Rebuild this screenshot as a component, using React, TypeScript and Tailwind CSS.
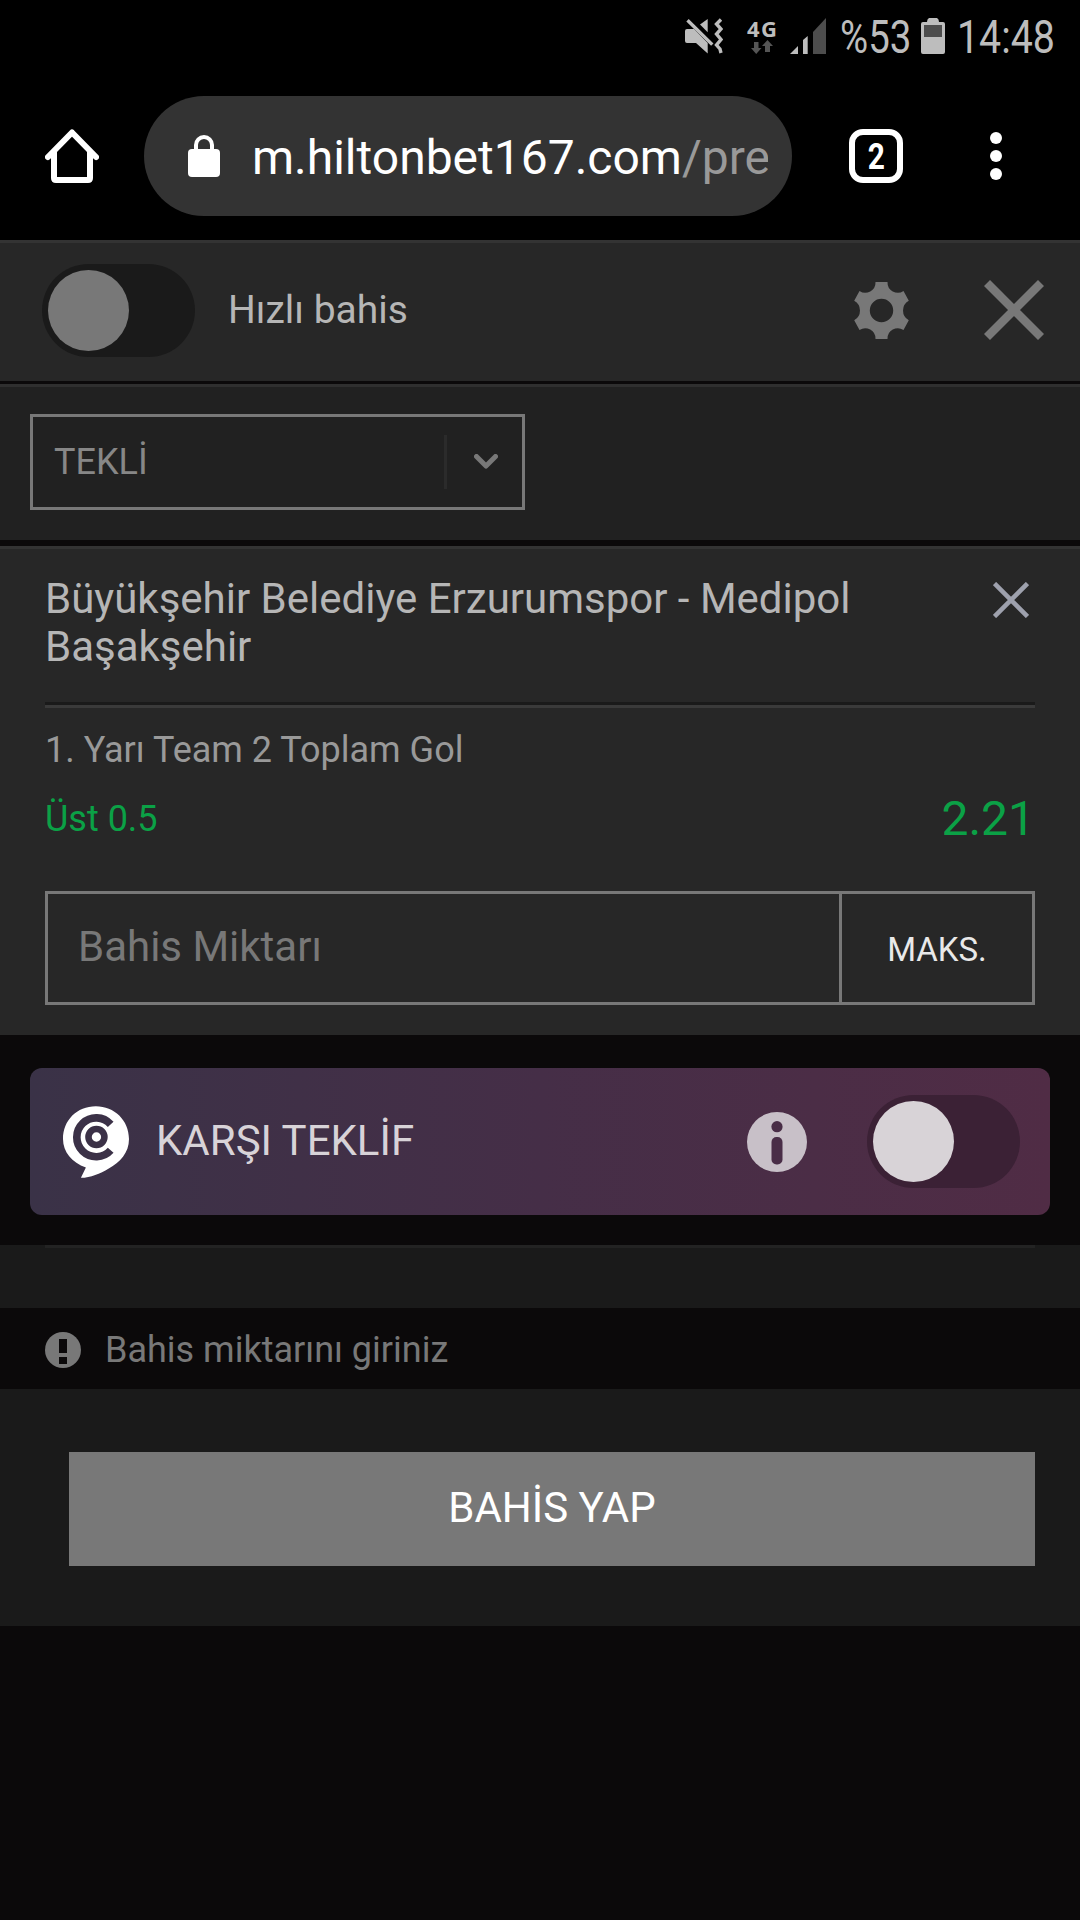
import { useState } from "react";
import clsx from "clsx";

function StatusBar() {
  return (
    <div className="flex h-[72px] items-center bg-black pl-[685px] text-[#bdbdbd]">
      <svg className="h-9 w-[38px] shrink-0" viewBox="0 0 38 36" fill="currentColor">
        <path d="M2 11H9L22.7 25V35.5L11 25H2Q0 25 0 23V13Q0 11 2 11Z" />
        <path d="M15 6.5L22.7 1V14.3Z" />
        <path
          d="M2.5 2.3L27.3 26.6M36 1.5L31.5 6L36 11L31.5 16L36 21.5L31.5 27L35 31L36 35"
          fill="none"
          stroke="currentColor"
          strokeWidth="3.4"
        />
      </svg>
      <div className="ml-6 flex h-9 w-[30px] shrink-0 flex-col">
        <span className="pt-[2px] font-['Open_Sans',sans-serif] text-[22px] leading-[16px] font-bold tracking-[1.5px]">
          4G
        </span>
        <svg className="mt-[4px] ml-[4px] h-[14px] w-[22px]" viewBox="0 0 22 14" fill="#555">
          <path d="M3 2H7.5V8H10.5L5.2 14L0 8H3Z" />
          <path d="M14 12H19V6H22L16.5 0L11 6H14Z" />
        </svg>
      </div>
      <svg className="ml-[13px] h-9 w-9 shrink-0" viewBox="0 0 36 36" fill="currentColor">
        <path d="M0 36L8 28V36ZM13 22L17.7 18V36H13Z" />
        <path d="M23 14L36 0V36H23Z" fill="#4d4d4d" />
      </svg>
      <div className="ml-[14px] w-[81px] shrink-0 pt-[2px]">
        <span className="block origin-left scale-x-[0.835] text-[46px] leading-[72px]">%53</span>
      </div>
      <svg className="h-9 w-6 shrink-0" viewBox="0 0 24 36" fill="currentColor">
        <path d="M8 0H16Q18 1 18 4H22Q24 4 24 6V34Q24 36 22 36H2Q0 36 0 34V6Q0 4 2 4H6Q6 1 8 0Z" />
        <path d="M3 7H21V19H3Z" fill="#4d4d4d" />
      </svg>
      <div className="ml-[12px] w-[100px] shrink-0 pt-[2px]">
        <span className="block origin-left scale-x-[0.855] text-[46px] leading-[72px]">14:48</span>
      </div>
    </div>
  );
}

function BrowserBar() {
  return (
    <div className="flex h-[168px] items-center bg-black pl-[45px] text-white">
      <svg className="h-[54px] w-[54px] shrink-0" viewBox="0 0 54 54" fill="none" stroke="currentColor" strokeWidth="6">
        <path d="M3 28L27 3.5L51 28" strokeLinecap="round" strokeLinejoin="round" />
        <path d="M9 22V49Q9 51 11 51H43Q45 51 45 49V22" />
      </svg>
      <div className="ml-[45px] flex h-[120px] w-[648px] shrink-0 items-center rounded-full bg-[#333] pl-11">
        <svg className="h-[42px] w-8 shrink-0" viewBox="0 0 32 42">
          <rect y="14" width="32" height="28" rx="4" fill="currentColor" />
          <path d="M8 16V10A8 8 0 0 1 24 10V16" fill="none" stroke="currentColor" strokeWidth="4" />
        </svg>
        <div className="ml-8 w-[516px] overflow-hidden pt-[4px] text-[48px] leading-[60px] whitespace-nowrap">
          m.hiltonbet167.com<span className="text-[#999]">/pre</span>
        </div>
      </div>
      <div className="ml-[57px] flex h-[54px] w-[54px] shrink-0 items-center justify-center rounded-[14px] border-[6px] border-white">
        <span className="scale-x-[0.83] pt-px text-[36px] leading-[42px] font-bold">2</span>
      </div>
      <svg className="ml-[87px] h-12 w-3 shrink-0" viewBox="0 0 12 48" fill="currentColor">
        <circle cx="6" cy="6" r="6" />
        <circle cx="6" cy="24" r="6" />
        <circle cx="6" cy="42" r="6" />
      </svg>
    </div>
  );
}

function Toggle({
  trackClass,
  knobClass,
}: {
  trackClass: string;
  knobClass: string;
}) {
  const [on, setOn] = useState(false);
  return (
    <button
      role="switch"
      aria-checked={on}
      onClick={() => setOn(!on)}
      className={clsx(
        "flex h-[93px] w-[153px] shrink-0 items-center rounded-full px-[6px]",
        on ? "justify-end" : "justify-start",
        trackClass
      )}
    >
      <span className={clsx("size-[81px] rounded-full", knobClass)} />
    </button>
  );
}

function SlipHeader() {
  return (
    <div className="flex h-[141px] items-start border-t-[3px] border-[#333] bg-[#272727] pt-[21px] pl-[42px]">
      <Toggle trackClass="bg-[#1a1a1a]" knobClass="bg-[#787878]" />
      <span className="ml-[33px] w-[626px] text-[39px] leading-[92px] text-[#b6b6b6]">Hızlı bahis</span>
      <svg className="mt-[18px] h-[57px] w-[55px] shrink-0 text-[#787878]" viewBox="-27.5 -28.5 55 57">
        <path
          fill="currentColor"
          fillRule="evenodd"
          d="M-6 -28.5H6A10.3 10.3 0 0 0 22 -19.5L27.3 -9.8A11.2 11.2 0 0 0 27.3 9.8L22 19.5A10.3 10.3 0 0 0 6 28.5H-6A10.3 10.3 0 0 0 -22 19.5L-27.3 9.8A11.2 11.2 0 0 0 -27.3 -9.8L-22 -19.5A10.3 10.3 0 0 0 -6 -28.5ZM0 -11.7A11.7 11.7 0 1 0 0 11.7A11.7 11.7 0 1 0 0 -11.7Z"
        />
      </svg>
      <svg className="mt-[16px] ml-[75px] size-[60px] shrink-0" viewBox="0 0 60 60" stroke="#787878" strokeWidth="8.5">
        <path d="M3 3L57 57M57 3L3 57" />
      </svg>
    </div>
  );
}

function BetTypeSelect() {
  return (
    <div className="mt-[3px] h-[156px] border-t-[3px] border-[#2f2f2f] bg-[#212121] pt-[27px] pl-[30px]">
      <div className="flex h-24 w-[495px] items-center border-[3px] border-[#787878] pl-[21px]">
        <span className="w-[390px] text-[36px] leading-[90px] text-[#878787]">TEKLİ</span>
        <span className="h-[54px] w-[3px] bg-[#2b2b2b]" />
        <svg className="mb-[2px] ml-[27px] h-[15px] w-6" viewBox="0 0 24 15" fill="none" stroke="#787878" strokeWidth="5">
          <path d="M2.5 2.5L12 12L21.5 2.5" strokeLinecap="round" strokeLinejoin="round" />
        </svg>
      </div>
    </div>
  );
}

function BetCard() {
  return (
    <div className="mt-[6px] h-[489px] border-t-[3px] border-[#333] bg-[#272727] px-[45px] pt-[26px]">
      <div className="flex items-start justify-between">
        <h2 className="w-[850px] text-[42px] leading-[48px] text-[#b6b6b6]">
          Büyükşehir Belediye Erzurumspor - Medipol Başakşehir
        </h2>
        <svg className="mt-[7px] mr-[6px] size-9" viewBox="0 0 36 36" stroke="#9ea1ad" strokeWidth="4.6">
          <path d="M1.5 1.5L34.5 34.5M34.5 1.5L1.5 34.5" />
        </svg>
      </div>
      <div className="mt-[31px] h-[6px] border-t-[3px] border-b-[3px] border-t-[#1a1a1a] border-b-[#3a3a3a]" />
      <p className="mt-[18px] text-[36px] leading-[48px] text-[#999]">1. Yarı Team 2 Toplam Gol</p>
      <div className="mt-[21px] flex justify-between leading-[48px] text-[#0ba146]">
        <span className="text-[36px]">Üst 0.5</span>
        <span className="text-[48px]">2.21</span>
      </div>
      <div className="mt-[48px] flex h-[114px] border-[3px] border-[#787878]">
        <input
          type="text"
          placeholder="Bahis Miktarı"
          className="w-[794px] border-r-[3px] border-[#787878] pb-[3px] pl-[30px] text-[42px] text-white outline-none placeholder:text-[#787878]"
        />
        <button className="flex-1 pt-[3px] text-[33px] text-[#e9e9e9]">MAKS.</button>
      </div>
    </div>
  );
}

function CounterOfferLogo() {
  return (
    <svg className="h-[72px] w-[66px] shrink-0" viewBox="0 0 66.3 72">
      <path
        fill="#fff"
        d="M33 0C51.5 0 66.3 14 66.3 33C66.300 47 57 56.5 46 62.5C37 68 28 71.5 18 72L23 61.5C9 57 0 46 0 33C0 14 14 0 33 0Z"
      />
      <g fill="none" stroke="#3b3147">
        <path d="M47.9 18.3A19.5 19.5 0 1 0 47.9 44.3" strokeWidth="7.7" />
        <circle cx="33.6" cy="31" r="8" strokeWidth="6.6" />
      </g>
    </svg>
  );
}

function CounterOffer() {
  return (
    <div className="h-[210px] px-[30px] pt-[33px]">
      <div className="flex h-[147px] items-center rounded-xl bg-linear-to-r from-[#3a3247] via-[#452e47] to-[#502c45] pl-[33px]">
        <CounterOfferLogo />
        <span className="ml-[27px] w-[591px] pb-[2px] text-[42px] leading-[60px] text-[#d8d3d8]">KARŞI TEKLİF</span>
        <svg className="size-[60px] shrink-0" viewBox="0 0 60 60">
          <circle cx="30" cy="30" r="30" fill="#c8c0c8" />
          <circle cx="30" cy="14.7" r="5.6" fill="#492d47" />
          <rect x="24.5" y="25" width="11" height="27.5" rx="5" fill="#492d47" />
        </svg>
        <div className="ml-[60px]">
          <Toggle trackClass="bg-[#3b2135]" knobClass="bg-[#d8d3d7]" />
        </div>
      </div>
    </div>
  );
}

function SlipFooter() {
  return (
    <div className="h-[381px] bg-[#1a1a1a]">
      <div className="h-[63px] px-[45px]">
        <div className="h-[3px] bg-[#232323]" />
      </div>
      <div className="flex h-[81px] items-center bg-[#0b090a] pl-[45px] text-[#787878]">
        <svg className="mt-[2px] size-9 shrink-0" viewBox="0 0 36 36">
          <circle cx="18" cy="18" r="18" fill="currentColor" />
          <path d="M14 7H22V21H14ZM14 25H22V32H14Z" fill="#0b090a" />
        </svg>
        <span className="ml-[24px] pt-[2px] text-[36px] leading-[48px]">Bahis miktarını giriniz</span>
      </div>
      <div className="pt-[63px] pr-[45px] pl-[69px]">
        <button className="block h-[114px] w-full bg-[#787878] pb-[2px] text-[42px] leading-[60px] text-white">
          BAHİS YAP
        </button>
      </div>
    </div>
  );
}

export default function App() {
  return (
    <div className="h-[1920px] w-[1080px] overflow-hidden bg-[#0b090a] font-[Roboto,sans-serif]">
      <StatusBar />
      <BrowserBar />
      <SlipHeader />
      <BetTypeSelect />
      <BetCard />
      <CounterOffer />
      <SlipFooter />
    </div>
  );
}
